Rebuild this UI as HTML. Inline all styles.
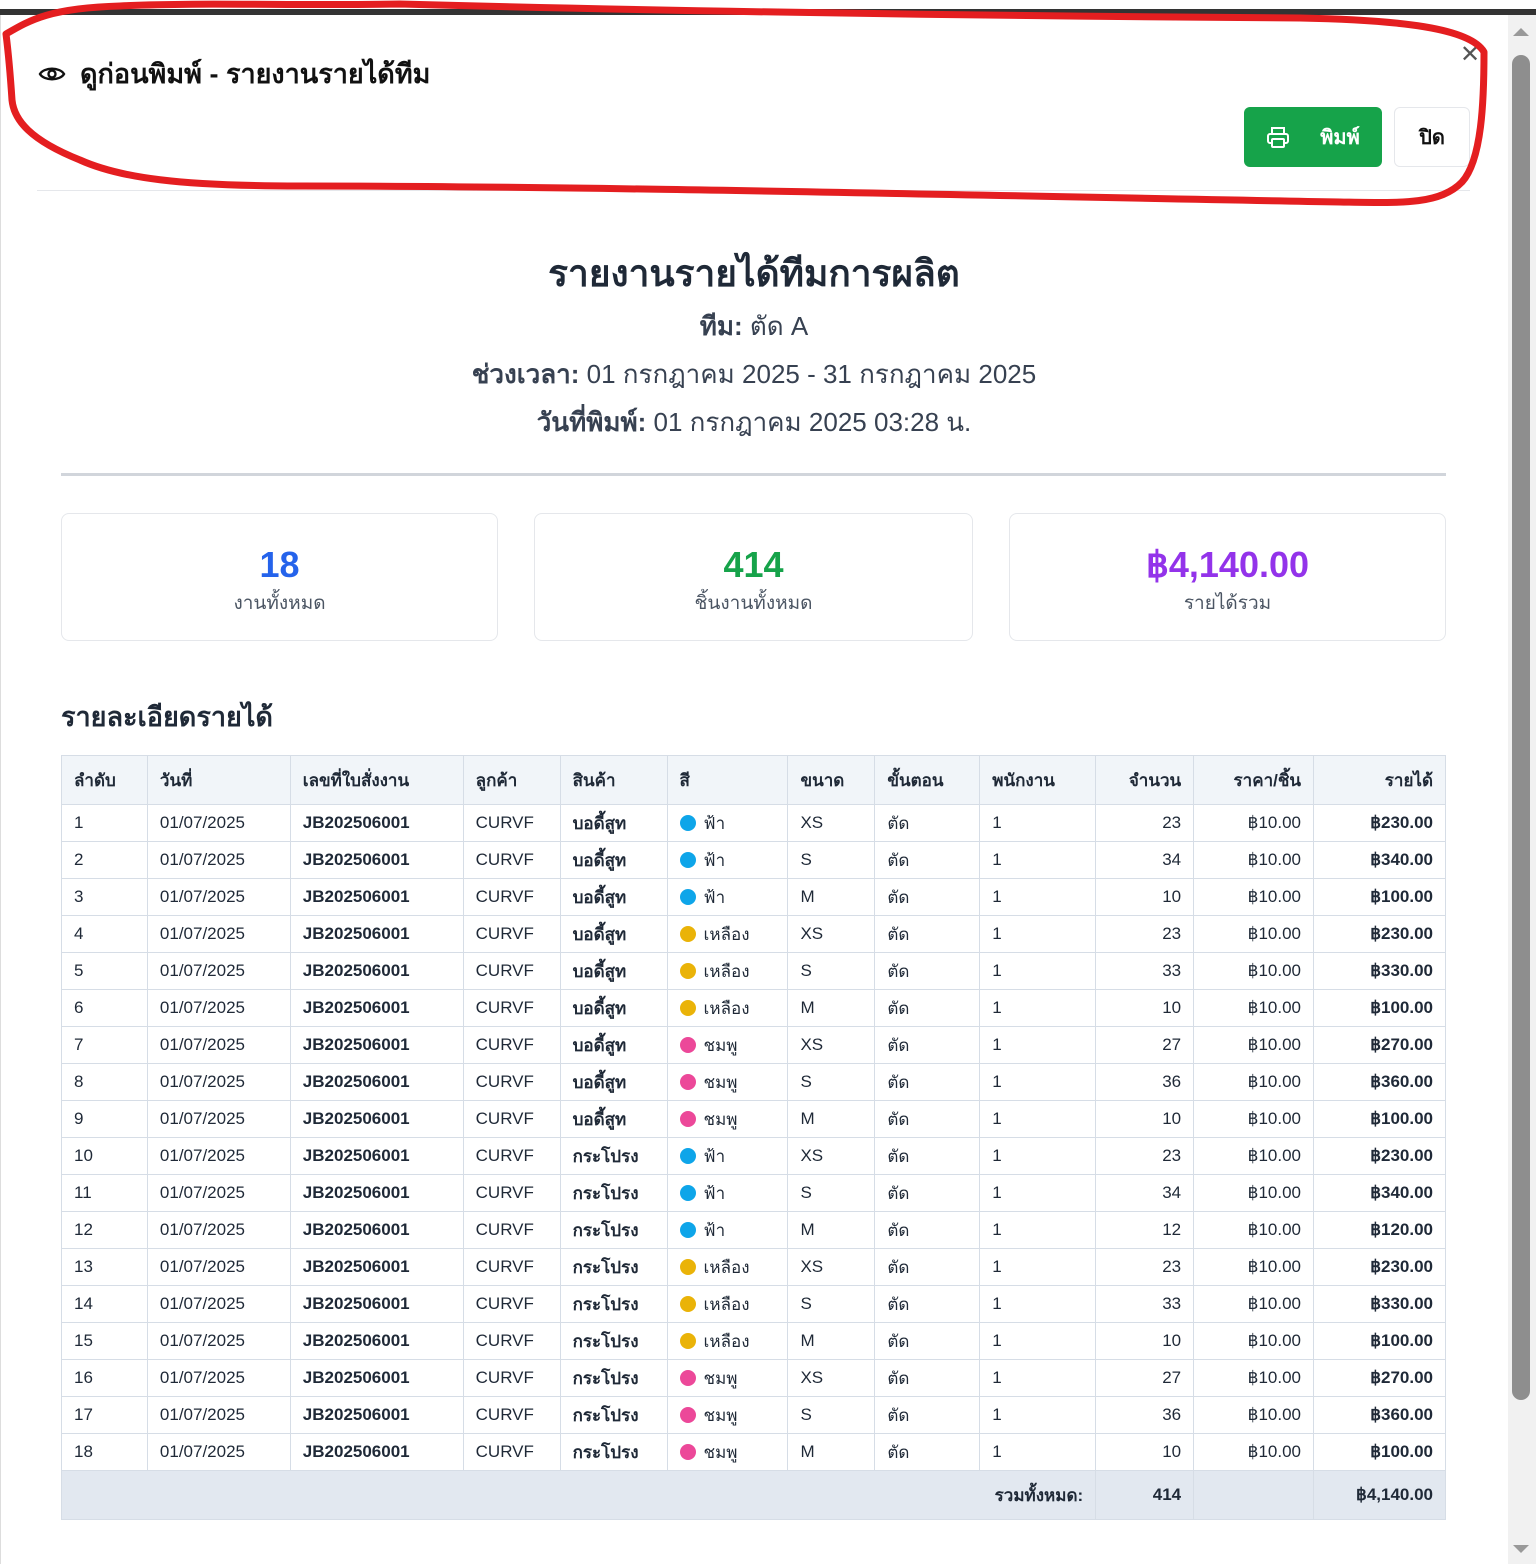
<!DOCTYPE html>
<html><head><meta charset="utf-8"><style>
*{box-sizing:border-box;margin:0;padding:0}
body{width:1536px;height:1564px;overflow:hidden;background:#fff;font-family:"Liberation Sans","Noto Sans CJK SC",sans-serif;color:#1f2937;position:relative}
.topbar{position:absolute;left:0;top:9px;width:1536px;height:6px;background:#333}
.modal{position:absolute;left:0;top:15px;width:1508px;height:1549px;background:#fff;border-left:1px solid #ddd}
.sb{position:absolute;left:1508px;top:15px;width:28px;height:1549px;background:#f1f1f1}
.thumb{position:absolute;left:1512px;top:55px;width:18px;height:1345px;background:#8e8e8e;border-radius:9px}
.title{position:absolute;left:38px;top:52px;font-size:27px;font-weight:bold;color:#111;display:flex;align-items:center;gap:14px}
.close{position:absolute;left:1460px;top:40px;font-size:24px;color:#555}
.btnp{position:absolute;left:1244px;top:107px;width:138px;height:60px;background:#16a34a;border-radius:6px;color:#fff;font-weight:bold;font-size:20px;display:flex;align-items:center;justify-content:center;gap:30px}
.btnc{position:absolute;left:1394px;top:107px;width:76px;height:60px;border:1px solid #e5e7eb;border-radius:6px;font-weight:bold;font-size:20px;display:flex;align-items:center;justify-content:center;color:#111}
.hr1{position:absolute;left:37px;top:190px;width:1433px;height:1px;background:#e5e7eb}
.h1{position:absolute;left:0;width:1508px;text-align:center;top:244px;font-size:37px;font-weight:bold;color:#1f2937}
.meta{position:absolute;left:0;width:1508px;text-align:center;font-size:26px;color:#374151}
.meta b{color:#374151}
.hr2{position:absolute;left:61px;top:473px;width:1385px;height:3px;background:#d1d5db}
.card{position:absolute;top:513px;height:128px;border:1px solid #e5e7eb;border-radius:8px;text-align:center}
.card .n{font-size:36px;font-weight:bold;margin-top:30px;line-height:42px}
.card .l{font-size:19px;color:#4b5563;margin-top:2px}
.h2{position:absolute;left:61px;top:695px;font-size:27px;font-weight:bold;color:#1f2937}
table{position:absolute;left:61px;top:755px;width:1385px;border-collapse:collapse;font-size:17px}
td,th{border:1px solid #d6dde6;height:37px;padding:0 12px;text-align:left;white-space:nowrap}
th{background:#f1f5f9;height:49px;font-weight:bold}
.r{text-align:right}
.b{font-weight:bold}
tfoot td{background:#e2e8f0;height:49px;font-weight:bold}
.d{display:inline-block;width:16px;height:16px;border-radius:50%;vertical-align:-2px;margin-right:8px}
.s{background:#0ea5e9}.y{background:#eab308}.p{background:#ec4899}
</style></head><body>
<div class="topbar"></div>
<div class="modal"></div>
<div class="sb"></div><div class="thumb"></div>
<div style="position:absolute;left:1513px;top:28px;width:0;height:0;border-left:8px solid transparent;border-right:8px solid transparent;border-bottom:8px solid #999"></div>
<div style="position:absolute;left:1513px;top:1545px;width:0;height:0;border-left:8px solid transparent;border-right:8px solid transparent;border-top:8px solid #999"></div>
<div class="title"><svg width="28" height="20" viewBox="0 0 28 20"><path d="M2 10C6 3 22 3 26 10C22 17 6 17 2 10Z" fill="none" stroke="#111" stroke-width="2.4"/><circle cx="14" cy="10" r="3.5" fill="none" stroke="#111" stroke-width="2.4"/></svg>ดูก่อนพิมพ์ - รายงานรายได้ทีม</div>
<div class="close">✕</div>
<div class="btnp"><svg width="24" height="24" viewBox="0 0 24 24" fill="none" stroke="#fff" stroke-width="2"><path d="M6 9V3h12v6M6 18H4a2 2 0 0 1-2-2v-5a2 2 0 0 1 2-2h16a2 2 0 0 1 2 2v5a2 2 0 0 1-2 2h-2"/><rect x="6" y="14" width="12" height="8" rx="1"/></svg><span>พิมพ์</span></div>
<div class="btnc">ปิด</div>
<div class="hr1"></div>
<div class="h1">รายงานรายได้ทีมการผลิต</div>
<div class="meta" style="top:306px"><b>ทีม:</b> ตัด A</div>
<div class="meta" style="top:354px"><b>ช่วงเวลา:</b> 01 กรกฎาคม 2025 - 31 กรกฎาคม 2025</div>
<div class="meta" style="top:402px"><b>วันที่พิมพ์:</b> 01 กรกฎาคม 2025 03:28 น.</div>
<div class="hr2"></div>
<div class="card" style="left:61px;width:437px"><div class="n" style="color:#2563eb">18</div><div class="l">งานทั้งหมด</div></div>
<div class="card" style="left:534px;width:439px"><div class="n" style="color:#16a34a">414</div><div class="l">ชิ้นงานทั้งหมด</div></div>
<div class="card" style="left:1009px;width:437px"><div class="n" style="color:#9333ea">฿4,140.00</div><div class="l">รายได้รวม</div></div>
<div class="h2">รายละเอียดรายได้</div>
<table>
<colgroup><col style="width:86px"><col style="width:143px"><col style="width:173px"><col style="width:97px"><col style="width:107px"><col style="width:121px"><col style="width:87px"><col style="width:105px"><col style="width:116px"><col style="width:98px"><col style="width:120px"><col style="width:132px"></colgroup>
<thead><tr><th>ลำดับ</th><th>วันที่</th><th>เลขที่ใบสั่งงาน</th><th>ลูกค้า</th><th>สินค้า</th><th>สี</th><th>ขนาด</th><th>ขั้นตอน</th><th>พนักงาน</th><th class="r">จำนวน</th><th class="r">ราคา/ชิ้น</th><th class="r">รายได้</th></tr></thead>
<tbody>
<tr><td>1</td><td>01/07/2025</td><td class="b">JB202506001</td><td>CURVF</td><td class="b">บอดี้สูท</td><td><span class="d s"></span>ฟ้า</td><td>XS</td><td>ตัด</td><td>1</td><td class="r">23</td><td class="r">฿10.00</td><td class="r b">฿230.00</td></tr>
<tr><td>2</td><td>01/07/2025</td><td class="b">JB202506001</td><td>CURVF</td><td class="b">บอดี้สูท</td><td><span class="d s"></span>ฟ้า</td><td>S</td><td>ตัด</td><td>1</td><td class="r">34</td><td class="r">฿10.00</td><td class="r b">฿340.00</td></tr>
<tr><td>3</td><td>01/07/2025</td><td class="b">JB202506001</td><td>CURVF</td><td class="b">บอดี้สูท</td><td><span class="d s"></span>ฟ้า</td><td>M</td><td>ตัด</td><td>1</td><td class="r">10</td><td class="r">฿10.00</td><td class="r b">฿100.00</td></tr>
<tr><td>4</td><td>01/07/2025</td><td class="b">JB202506001</td><td>CURVF</td><td class="b">บอดี้สูท</td><td><span class="d y"></span>เหลือง</td><td>XS</td><td>ตัด</td><td>1</td><td class="r">23</td><td class="r">฿10.00</td><td class="r b">฿230.00</td></tr>
<tr><td>5</td><td>01/07/2025</td><td class="b">JB202506001</td><td>CURVF</td><td class="b">บอดี้สูท</td><td><span class="d y"></span>เหลือง</td><td>S</td><td>ตัด</td><td>1</td><td class="r">33</td><td class="r">฿10.00</td><td class="r b">฿330.00</td></tr>
<tr><td>6</td><td>01/07/2025</td><td class="b">JB202506001</td><td>CURVF</td><td class="b">บอดี้สูท</td><td><span class="d y"></span>เหลือง</td><td>M</td><td>ตัด</td><td>1</td><td class="r">10</td><td class="r">฿10.00</td><td class="r b">฿100.00</td></tr>
<tr><td>7</td><td>01/07/2025</td><td class="b">JB202506001</td><td>CURVF</td><td class="b">บอดี้สูท</td><td><span class="d p"></span>ชมพู</td><td>XS</td><td>ตัด</td><td>1</td><td class="r">27</td><td class="r">฿10.00</td><td class="r b">฿270.00</td></tr>
<tr><td>8</td><td>01/07/2025</td><td class="b">JB202506001</td><td>CURVF</td><td class="b">บอดี้สูท</td><td><span class="d p"></span>ชมพู</td><td>S</td><td>ตัด</td><td>1</td><td class="r">36</td><td class="r">฿10.00</td><td class="r b">฿360.00</td></tr>
<tr><td>9</td><td>01/07/2025</td><td class="b">JB202506001</td><td>CURVF</td><td class="b">บอดี้สูท</td><td><span class="d p"></span>ชมพู</td><td>M</td><td>ตัด</td><td>1</td><td class="r">10</td><td class="r">฿10.00</td><td class="r b">฿100.00</td></tr>
<tr><td>10</td><td>01/07/2025</td><td class="b">JB202506001</td><td>CURVF</td><td class="b">กระโปรง</td><td><span class="d s"></span>ฟ้า</td><td>XS</td><td>ตัด</td><td>1</td><td class="r">23</td><td class="r">฿10.00</td><td class="r b">฿230.00</td></tr>
<tr><td>11</td><td>01/07/2025</td><td class="b">JB202506001</td><td>CURVF</td><td class="b">กระโปรง</td><td><span class="d s"></span>ฟ้า</td><td>S</td><td>ตัด</td><td>1</td><td class="r">34</td><td class="r">฿10.00</td><td class="r b">฿340.00</td></tr>
<tr><td>12</td><td>01/07/2025</td><td class="b">JB202506001</td><td>CURVF</td><td class="b">กระโปรง</td><td><span class="d s"></span>ฟ้า</td><td>M</td><td>ตัด</td><td>1</td><td class="r">12</td><td class="r">฿10.00</td><td class="r b">฿120.00</td></tr>
<tr><td>13</td><td>01/07/2025</td><td class="b">JB202506001</td><td>CURVF</td><td class="b">กระโปรง</td><td><span class="d y"></span>เหลือง</td><td>XS</td><td>ตัด</td><td>1</td><td class="r">23</td><td class="r">฿10.00</td><td class="r b">฿230.00</td></tr>
<tr><td>14</td><td>01/07/2025</td><td class="b">JB202506001</td><td>CURVF</td><td class="b">กระโปรง</td><td><span class="d y"></span>เหลือง</td><td>S</td><td>ตัด</td><td>1</td><td class="r">33</td><td class="r">฿10.00</td><td class="r b">฿330.00</td></tr>
<tr><td>15</td><td>01/07/2025</td><td class="b">JB202506001</td><td>CURVF</td><td class="b">กระโปรง</td><td><span class="d y"></span>เหลือง</td><td>M</td><td>ตัด</td><td>1</td><td class="r">10</td><td class="r">฿10.00</td><td class="r b">฿100.00</td></tr>
<tr><td>16</td><td>01/07/2025</td><td class="b">JB202506001</td><td>CURVF</td><td class="b">กระโปรง</td><td><span class="d p"></span>ชมพู</td><td>XS</td><td>ตัด</td><td>1</td><td class="r">27</td><td class="r">฿10.00</td><td class="r b">฿270.00</td></tr>
<tr><td>17</td><td>01/07/2025</td><td class="b">JB202506001</td><td>CURVF</td><td class="b">กระโปรง</td><td><span class="d p"></span>ชมพู</td><td>S</td><td>ตัด</td><td>1</td><td class="r">36</td><td class="r">฿10.00</td><td class="r b">฿360.00</td></tr>
<tr><td>18</td><td>01/07/2025</td><td class="b">JB202506001</td><td>CURVF</td><td class="b">กระโปรง</td><td><span class="d p"></span>ชมพู</td><td>M</td><td>ตัด</td><td>1</td><td class="r">10</td><td class="r">฿10.00</td><td class="r b">฿100.00</td></tr>
</tbody>
<tfoot><tr><td colspan="9" class="r">รวมทั้งหมด:</td><td class="r">414</td><td></td><td class="r">฿4,140.00</td></tr></tfoot>
</table>
<svg style="position:absolute;left:0;top:0" width="1536" height="220" viewBox="0 0 1536 220"><path d="M6 34 C30 20 50 8 120 6 C200 2 300 6 400 4 C700 12 1000 16 1300 18 C1400 20 1470 28 1484 52 C1484 100 1482 160 1462 182 C1440 205 1400 203 1340 202 C1000 196 600 186 300 186 C180 186 120 178 80 160 C30 140 14 120 12 100 C10 70 8 50 6 34 Z" fill="none" stroke="#e41e20" stroke-width="7" stroke-linejoin="round"/></svg>
</body></html>
